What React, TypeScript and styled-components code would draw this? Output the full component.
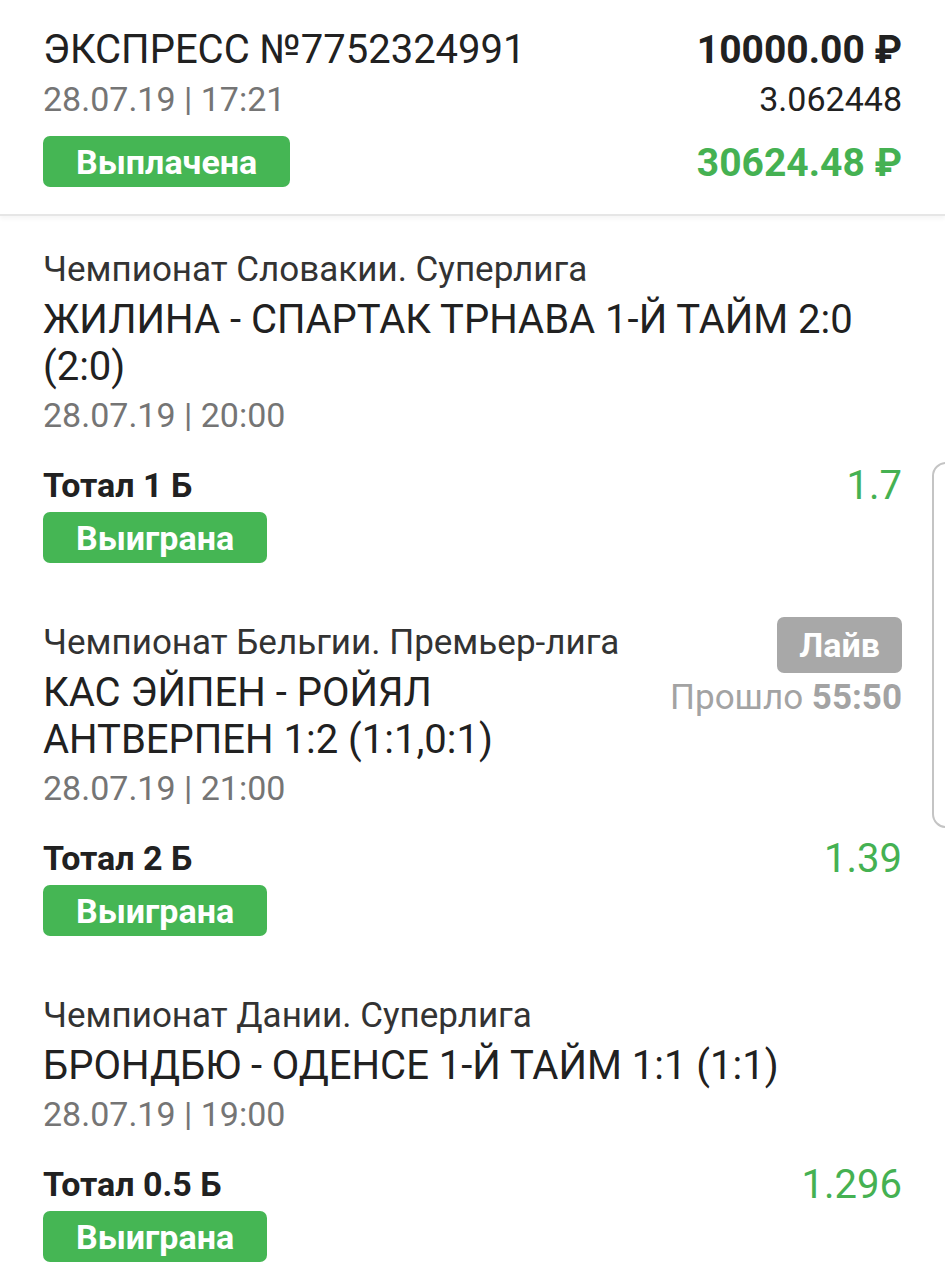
import React from "react";
import styled, { createGlobalStyle } from "styled-components";

const Global = createGlobalStyle`
  html, body { margin: 0; padding: 0; background: #fff; }
  body { font-family: Roboto, "Noto Sans", "Liberation Sans", sans-serif; color: #212121; }
  * { box-sizing: border-box; }
`;

const Page = styled.div`
  position: relative;
  width: 945px;
  min-height: 1280px;
  overflow: hidden;
  background: #fff;
`;

const Header = styled.header`
  display: flex;
  justify-content: space-between;
  padding: 26px 43px 27px 43px;
  border-bottom: 2px solid #e6e6e6;
  box-shadow: 0 3px 4px rgba(0, 0, 0, 0.04);
`;

const Col = styled.div<{ $right?: boolean }>`
  display: flex;
  flex-direction: column;
  align-items: ${(p) => (p.$right ? "flex-end" : "flex-start")};
`;

const Title = styled.div`
  font-size: 40px;
  line-height: 48px;
  color: #212121;
`;

const DateText = styled.div`
  font-size: 34px;
  line-height: 50px;
  color: #757575;
`;

const Amount = styled.div<{ $green?: boolean }>`
  font-size: 39px;
  line-height: 48px;
  font-weight: 700;
  color: ${(p) => (p.$green ? "#45b152" : "#212121")};
  margin-top: ${(p) => (p.$green ? "15px" : "0")};
`;

const Coef = styled.div`
  font-size: 34px;
  line-height: 50px;
  color: #212121;
`;

const Badge = styled.div<{ $gray?: boolean; $h?: number }>`
  display: inline-flex;
  align-items: center;
  justify-content: center;
  height: ${(p) => p.$h ?? 51}px;
  padding: 0 ${(p) => (p.$gray ? 22 : 33)}px;
  border-radius: 7px;
  background: ${(p) => (p.$gray ? "#a8a8a8" : "#45b654")};
  color: #fff;
  font-weight: 700;
  font-size: 34px;
  line-height: 1;
`;

const StatusBadge = styled(Badge)`
  margin-top: 12px;
`;

const Content = styled.main`
  display: flex;
  flex-direction: column;
  gap: 62px;
  padding: 36px 43px 40px 43px;
`;

const Event = styled.section`
  display: flex;
  flex-direction: column;
`;

const TopRow = styled.div`
  display: flex;
  justify-content: space-between;
  align-items: flex-start;
  gap: 44px;
`;

const EventInfo = styled.div`
  flex: 1;
  min-width: 0;
  display: flex;
  flex-direction: column;
`;

const League = styled.div`
  font-size: 35px;
  line-height: 36px;
  color: #333;
`;

const Match = styled.div`
  font-size: 40px;
  line-height: 47px;
  margin-top: 8px;
  color: #212121;
`;

const EventDate = styled(DateText)`
  line-height: 48px;
  margin-top: 1px;
`;

const LiveCol = styled.div`
  display: flex;
  flex-direction: column;
  align-items: flex-end;
  margin-top: -8px;
  flex-shrink: 0;
`;

const Elapsed = styled.div`
  font-size: 35px;
  line-height: 50px;
  color: #a3a3a3;
  b { font-weight: 700; }
`;

const BetRow = styled.div`
  display: flex;
  justify-content: space-between;
  align-items: center;
  height: 40px;
  margin-top: 26px;
`;

const BetName = styled.div`
  font-size: 34px;
  font-weight: 700;
  color: #212121;
`;

const Odds = styled.div`
  font-size: 40px;
  color: #45b152;
`;

const ResultBadge = styled(Badge)`
  align-self: flex-start;
  margin-top: 7px;
`;

const ScrollHandle = styled.div`
  position: absolute;
  left: 932px;
  top: 462px;
  width: 40px;
  height: 366px;
  border: 2px solid #c4c4c4;
  border-radius: 14px;
  background: #fff;
`;

type Ev = {
  league: string;
  match: string;
  date: string;
  bet: string;
  odds: string;
  live?: { elapsed: string };
};

const events: Ev[] = [
  {
    league: "Чемпионат Словакии. Суперлига",
    match: "ЖИЛИНА - СПАРТАК ТРНАВА 1-Й ТАЙМ 2:0 (2:0)",
    date: "28.07.19 | 20:00",
    bet: "Тотал 1 Б",
    odds: "1.7",
  },
  {
    league: "Чемпионат Бельгии. Премьер-лига",
    match: "КАС ЭЙПЕН - РОЙЯЛ АНТВЕРПЕН 1:2 (1:1,0:1)",
    date: "28.07.19 | 21:00",
    bet: "Тотал 2 Б",
    odds: "1.39",
    live: { elapsed: "55:50" },
  },
  {
    league: "Чемпионат Дании. Суперлига",
    match: "БРОНДБЮ - ОДЕНСЕ 1-Й ТАЙМ 1:1 (1:1)",
    date: "28.07.19 | 19:00",
    bet: "Тотал 0.5 Б",
    odds: "1.296",
  },
];

export default function App() {
  return (
    <Page>
      <Global />
      <Header>
        <Col>
          <Title>ЭКСПРЕСС №7752324991</Title>
          <DateText>28.07.19 | 17:21</DateText>
          <StatusBadge>Выплачена</StatusBadge>
        </Col>
        <Col $right>
          <Amount>10000.00 ₽</Amount>
          <Coef>3.062448</Coef>
          <Amount $green>30624.48 ₽</Amount>
        </Col>
      </Header>
      <Content>
        {events.map((e) => (
          <Event key={e.match}>
            <TopRow>
              <EventInfo>
                <League>{e.league}</League>
                <Match>{e.match}</Match>
              </EventInfo>
              {e.live && (
                <LiveCol>
                  <Badge $gray $h={56}>Лайв</Badge>
                  <Elapsed>
                    Прошло <b>{e.live.elapsed}</b>
                  </Elapsed>
                </LiveCol>
              )}
            </TopRow>
            <EventDate>{e.date}</EventDate>
            <BetRow>
              <BetName>{e.bet}</BetName>
              <Odds>{e.odds}</Odds>
            </BetRow>
            <ResultBadge>Выиграна</ResultBadge>
          </Event>
        ))}
      </Content>
      <ScrollHandle />
    </Page>
  );
}
